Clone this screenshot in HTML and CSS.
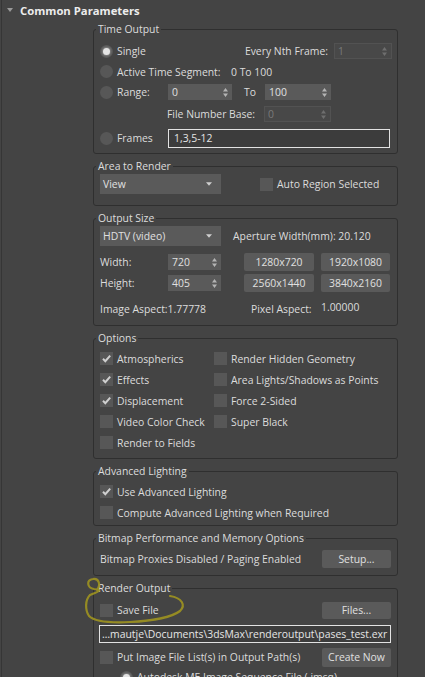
FILE: index.html
```html
<!DOCTYPE html>
<html>
<head>
<meta charset="utf-8">
<title>Common Parameters</title>
<link rel="stylesheet" href="styles.css">
</head>
<body>
<div class="panel">
  <div class="rollout-head"><span class="tri"></span><span class="rollout-title">Common Parameters</span></div>
  <div class="groups">

    <fieldset class="grp g-time">
      <legend>Time Output</legend>
      <div class="row r1">
        <span class="radio on"></span><span class="lbl">Single</span>
        <span class="lbl nth-lbl">Every Nth Frame:</span>
        <span class="field disabled w-nth">1<svg class="spin" viewBox="0 0 5 9"><path d="M2.5 0 5 3.5H0zM0 5.5h5L2.5 9z"/></svg></span>
      </div>
      <div class="row r2">
        <span class="radio"></span><span class="lbl w-seg">Active Time Segment:</span><span class="lbl">0 To 100</span>
      </div>
      <div class="row r3">
        <span class="radio"></span><span class="lbl w-range">Range:</span>
        <span class="field w-from">0<svg class="spin" viewBox="0 0 5 9"><path d="M2.5 0 5 3.5H0zM0 5.5h5L2.5 9z"/></svg></span>
        <span class="lbl to-lbl">To</span>
        <span class="field w-to">100<svg class="spin" viewBox="0 0 5 9"><path d="M2.5 0 5 3.5H0zM0 5.5h5L2.5 9z"/></svg></span>
      </div>
      <div class="row r4">
        <span class="lbl fnb-lbl">File Number Base:</span>
        <span class="field disabled w-fnb">0<svg class="spin" viewBox="0 0 5 9"><path d="M2.5 0 5 3.5H0zM0 5.5h5L2.5 9z"/></svg></span>
      </div>
      <div class="row r5">
        <span class="radio"></span><span class="lbl w-range">Frames</span>
        <span class="textbox w-frames">1,3,5-12</span>
      </div>
    </fieldset>

    <fieldset class="grp g-area">
      <legend>Area to Render</legend>
      <div class="row rh20">
        <span class="dropdown">View<svg class="dd" viewBox="0 0 7 4"><path d="M0 0h7L3.5 4z"/></svg></span>
        <span class="check auto-chk"></span><span class="lbl">Auto Region Selected</span>
      </div>
    </fieldset>

    <fieldset class="grp g-size">
      <legend>Output Size</legend>
      <div class="row rh20">
        <span class="dropdown">HDTV (video)<svg class="dd" viewBox="0 0 7 4"><path d="M0 0h7L3.5 4z"/></svg></span>
        <span class="lbl aperture">Aperture Width(mm): 20.120</span>
      </div>
      <div class="row s2">
        <span class="lbl w-dim">Width:</span>
        <span class="field w-dimf">720<svg class="spin" viewBox="0 0 5 9"><path d="M2.5 0 5 3.5H0zM0 5.5h5L2.5 9z"/></svg></span>
        <span class="btn b-first">1280x720</span>
        <span class="btn b-second">1920x1080</span>
      </div>
      <div class="row s3">
        <span class="lbl w-dim">Height:</span>
        <span class="field w-dimf">405<svg class="spin" viewBox="0 0 5 9"><path d="M2.5 0 5 3.5H0zM0 5.5h5L2.5 9z"/></svg></span>
        <span class="btn b-first">2560x1440</span>
        <span class="btn b-second">3840x2160</span>
      </div>
      <div class="row s4">
        <span class="lbl w-aspect">Image Aspect:1.77778</span>
        <span class="lbl w-pix">Pixel Aspect:</span>
        <span class="lbl pix-val">1.00000</span>
      </div>
    </fieldset>

    <fieldset class="grp g-opts">
      <legend>Options</legend>
      <div class="opts">
        <div class="opt"><span class="check on"><svg viewBox="0 0 13 13"><path d="M3 6.8 5.3 9.2 10.2 3.6"/></svg></span><span class="lbl">Atmospherics</span></div>
        <div class="opt"><span class="check"></span><span class="lbl">Render Hidden Geometry</span></div>
        <div class="opt"><span class="check on"><svg viewBox="0 0 13 13"><path d="M3 6.8 5.3 9.2 10.2 3.6"/></svg></span><span class="lbl">Effects</span></div>
        <div class="opt"><span class="check"></span><span class="lbl">Area Lights/Shadows as Points</span></div>
        <div class="opt"><span class="check on"><svg viewBox="0 0 13 13"><path d="M3 6.8 5.3 9.2 10.2 3.6"/></svg></span><span class="lbl">Displacement</span></div>
        <div class="opt"><span class="check"></span><span class="lbl">Force 2-Sided</span></div>
        <div class="opt"><span class="check"></span><span class="lbl">Video Color Check</span></div>
        <div class="opt"><span class="check"></span><span class="lbl">Super Black</span></div>
        <div class="opt"><span class="check"></span><span class="lbl">Render to Fields</span></div>
      </div>
    </fieldset>

    <fieldset class="grp g-adv">
      <legend>Advanced Lighting</legend>
      <div class="opt wide"><span class="check on"><svg viewBox="0 0 13 13"><path d="M3 6.8 5.3 9.2 10.2 3.6"/></svg></span><span class="lbl">Use Advanced Lighting</span></div>
      <div class="opt wide"><span class="check"></span><span class="lbl">Compute Advanced Lighting when Required</span></div>
    </fieldset>

    <fieldset class="grp g-bmp">
      <legend>Bitmap Performance and Memory Options</legend>
      <div class="row bmp-row">
        <span class="lbl">Bitmap Proxies Disabled / Paging Enabled</span>
        <span class="btn b-right">Setup...</span>
      </div>
    </fieldset>

    <fieldset class="grp g-out">
      <legend>Render Output</legend>
      <div class="row o1">
        <span class="check"></span><span class="lbl">Save File</span>
        <span class="btn b-right b-files">Files...</span>
      </div>
      <div class="textbox path">…mautje\Documents\3dsMax\renderoutput\pases_test.exr</div>
      <div class="row o3">
        <span class="check"></span><span class="lbl">Put Image File List(s) in Output Path(s)</span>
        <span class="btn b-right b-create">Create Now</span>
      </div>
      <div class="row o4">
        <span class="radio on"></span><span class="lbl">Autodesk ME Image Sequence File (.imsq)</span>
      </div>
    </fieldset>
  </div>

  <svg class="annot" viewBox="0 0 425 677" width="425" height="677">
    <path d="M97 590 C 101 585, 99 578, 93 579 C 86 580, 87 588, 94 589 C 104 590, 97 592, 90 595 C 85 600, 85 610, 89 616 C 95 622, 110 623, 130 622 C 152 621, 172 617, 180 611 C 186 605, 182 598, 170 596"/>
  </svg>
</div>
</body>
</html>
```

FILE: styles.css
```css
* { box-sizing: border-box; }
html, body { margin: 0; height: 100%; }
body {
  background: #444444;
  font-family: "Open Sans", "Noto Sans", "DejaVu Sans", sans-serif;
  font-size: 10.4px;
  color: #dcdcdc;
  overflow: hidden;
}
.panel {
  margin-left: 1px;
  border-left: 1px solid #363636;
  height: 677px;
  position: relative;
}
.rollout-head {
  height: 21px;
  display: flex;
  align-items: center;
  padding-left: 5px;
  padding-bottom: 1px;
}
.tri {
  width: 0; height: 0;
  border-left: 3px solid transparent;
  border-right: 3px solid transparent;
  border-top: 4px solid #9a9a9a;
  margin-right: 7px;
}
.rollout-title { font-weight: 700; color: #ececec; font-size: 11.3px; }

.groups { padding-left: 91px; }
.grp {
  width: 305px;
  margin: 0 0 4px;
  padding: 0 6px;
  border: 1px solid #2f2f2f;
  border-radius: 3px;
  min-width: 0;
}
.grp legend {
  padding: 0 2px;
  margin-left: -4px;
  line-height: 16px;
  height: 16px;
  color: #dcdcdc;
}
.row { display: flex; align-items: center; white-space: nowrap; }
.lbl { line-height: 16px; }

.radio {
  width: 13px; height: 13px; border-radius: 50%;
  background: #575757;
  flex: none;
  margin-right: 4px;
  position: relative;
}
.radio.on::after {
  content: "";
  position: absolute; left: 3px; top: 3px;
  width: 7px; height: 7px; border-radius: 50%;
  background: #e4e4e4;
  box-shadow: 0 0 2px 1px rgba(230,230,230,0.35);
}
.check {
  width: 13px; height: 13px;
  background: #575757;
  flex: none;
  margin-right: 4px;
  display: inline-flex;
}
.check svg { width: 13px; height: 13px; }
.check svg path { fill: none; stroke: #cfcfcf; stroke-width: 2; }

.field {
  height: 16px;
  background: #5a5a5a;
  display: flex; align-items: center;
  padding-left: 4px;
  position: relative;
  color: #e0e0e0;
  flex: none;
}
.field.disabled {
  background: #484848;
  border: 1px solid #525252;
  color: #7a7a7a;
  padding-left: 3px;
}
.spin { position: absolute; right: 4px; top: 50%; width: 5px; height: 9px; margin-top: -4.5px; fill: #b4b4b4; }
.field.disabled .spin { fill: #6e6e6e; }

.textbox {
  border: 1px solid #e2e2e2;
  background: #3c3c3c;
  color: #e6e6e6;
  padding-left: 5px;
  display: flex; align-items: center;
  overflow: hidden; white-space: nowrap;
}
.dropdown {
  width: 121px; height: 20px;
  background: #5a5a5a;
  display: flex; align-items: center;
  padding-left: 3px;
  position: relative;
  flex: none;
  color: #e0e0e0;
}
.dd { position: absolute; right: 9px; top: 8px; width: 6px; height: 4px; fill: #cfcfcf; }
.btn {
  height: 18px;
  background: #5a5a5a;
  border-radius: 2px;
  display: flex; align-items: center; justify-content: center;
  flex: none;
  color: #e0e0e0;
}

/* Time Output */
.g-time { padding-top: 4px; padding-bottom: 5px; }
.g-time .r1 { height: 20px; }
.nth-lbl { margin-left: auto; }
.w-nth { width: 58px; margin-left: 6px; margin-right: -1px; }
.g-time .r2 { height: 21px; }
.w-seg { width: 114px; }
.g-time .r3 { height: 20px; }
.w-range { width: 51px; }
.w-from { width: 64px; }
.to-lbl { margin-left: 12px; width: 21px; }
.w-to { width: 66px; }
.g-time .r4 { height: 20px; margin-top: 2px; }
.fnb-lbl { margin-left: 67px; width: 97px; }
.w-fnb { width: 67px; }
.g-time .r5 { height: 20px; margin-top: 4px; }
.w-frames { width: 222px; height: 19px; }

/* Area */
.g-area { padding-top: 0; padding-bottom: 11px; }
.rh20 { height: 20px; }
.auto-chk { margin-left: 39px; }

/* Output size */
.g-size { padding-bottom: 7px; }
.aperture { margin-left: 12px; }
.s2 { height: 18px; margin-top: 7px; }
.s3 { height: 18px; margin-top: 3px; }
.w-dim { width: 68px; }
.w-dimf { width: 53px; }
.b-first { width: 70px; margin-left: 23px; }
.b-second { width: 69px; margin-left: 7px; }
.s4 { height: 19px; margin-top: 7px; }
.w-aspect { width: 151px; }
.w-pix { width: 70px; }
.pix-val { position: relative; top: -2px; }

/* Options */
.g-opts { padding-top: 2px; padding-bottom: 5px; }
.opts { display: grid; grid-template-columns: 114px 1fr; }
.opt { height: 21px; display: flex; align-items: center; white-space: nowrap; }

/* Advanced */
.g-adv { padding-top: 2px; padding-bottom: 2px; }

/* Bitmap */
.g-bmp { padding-top: 2px; padding-bottom: 5px; }
.bmp-row { height: 22px; }
.b-right { width: 69px; margin-left: auto; }

/* Render output */
.g-out { padding-top: 4px; padding-bottom: 0; margin-top: 2px; }
.o1 { height: 20px; }
.b-files { height: 17px; }
.path { height: 18px; margin-top: 5px; width: 292px; margin-left: -1px; padding-left: 2px; }
.o3 { height: 20px; margin-top: 4px; }
.b-create { height: 19px; }
.o4 { height: 20px; margin-top: 0; padding-left: 20px; }

.annot {
  position: absolute; left: -2px; top: 0;
  pointer-events: none;
}
.annot path { fill: none; stroke: #9f9420; stroke-width: 2.2; stroke-linecap: round; opacity: 0.9; }
```
